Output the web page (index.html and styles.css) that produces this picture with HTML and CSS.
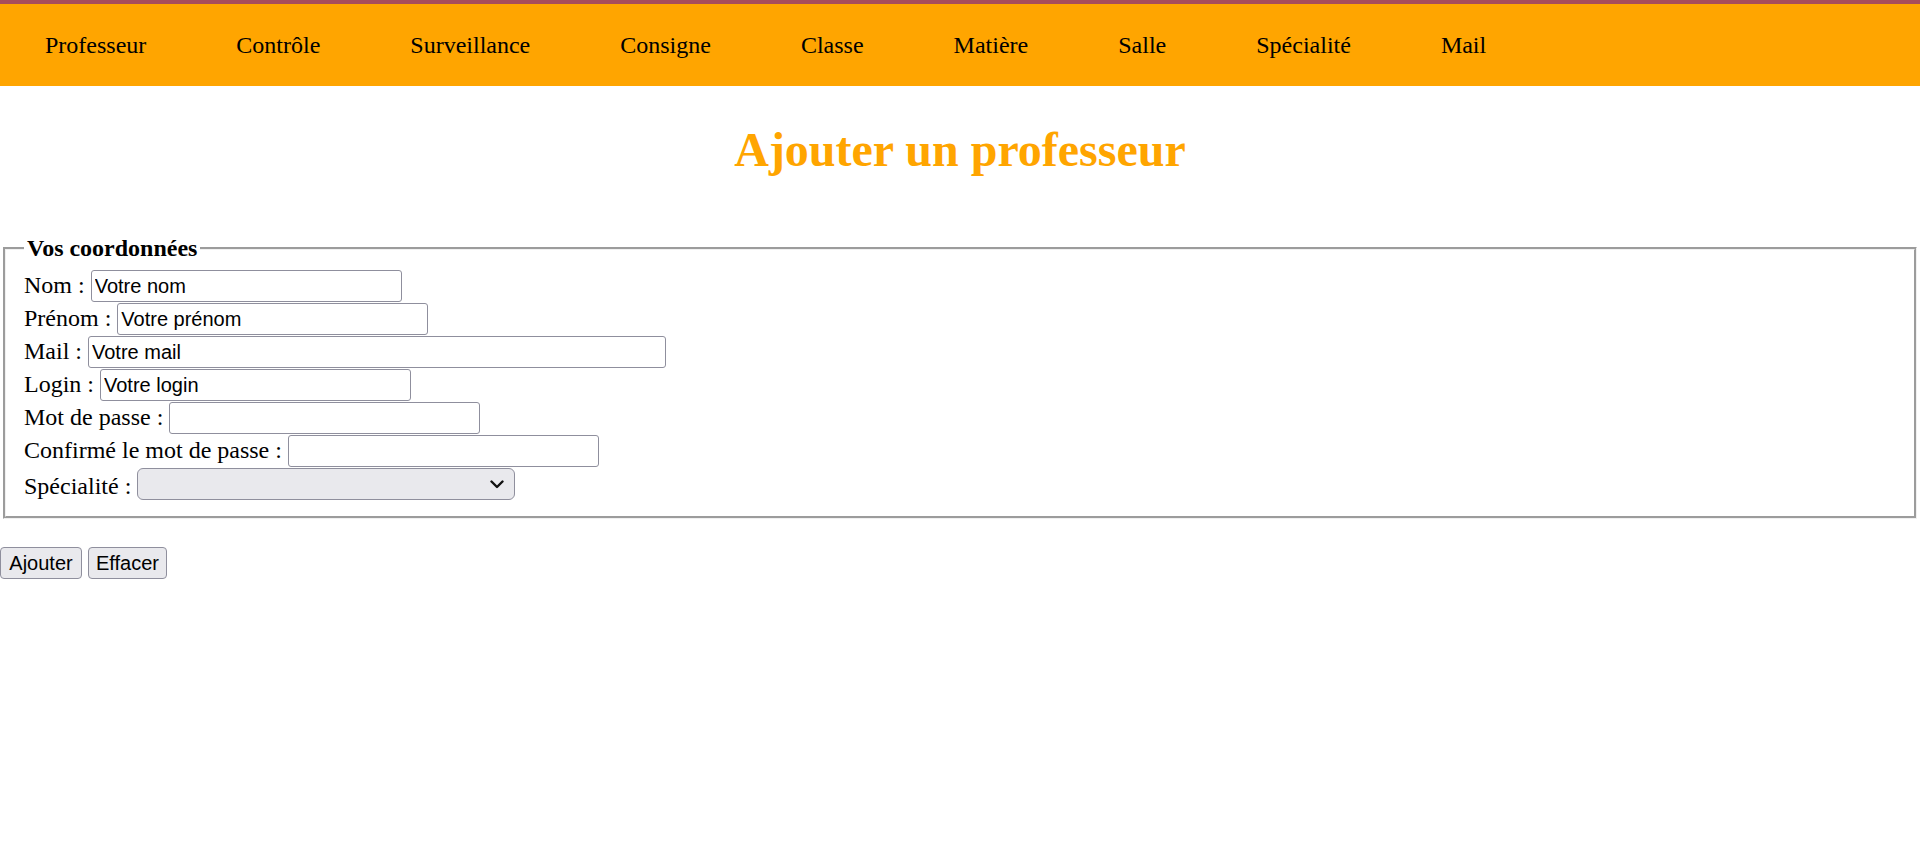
FILE: index.html
```html
<!DOCTYPE html>
<html lang="fr">
<head>
<meta charset="utf-8">
<title>Ajouter un professeur</title>
<link rel="stylesheet" href="styles.css">
</head>
<body>
<nav class="topnav">
  <ul class="menu">
    <li><a href="#">Professeur</a></li>
    <li><a href="#">Contrôle</a></li>
    <li><a href="#">Surveillance</a></li>
    <li><a href="#">Consigne</a></li>
    <li><a href="#">Classe</a></li>
    <li><a href="#">Matière</a></li>
    <li><a href="#">Salle</a></li>
    <li><a href="#">Spécialité</a></li>
    <li><a href="#">Mail</a></li>
  </ul>
</nav>
<h1 class="title">Ajouter un professeur</h1>
<form class="form">
  <fieldset class="box">
    <legend class="box-legend">Vos coordonnées</legend>
    <div class="row">Nom : <input class="field" type="text" value="Votre nom"></div>
    <div class="row">Prénom : <input class="field" type="text" value="Votre prénom"></div>
    <div class="row">Mail : <input class="field field-wide" type="text" value="Votre mail"></div>
    <div class="row">Login : <input class="field" type="text" value="Votre login"></div>
    <div class="row">Mot de passe : <input class="field" type="password"></div>
    <div class="row">Confirmé le mot de passe : <input class="field" type="password"></div>
    <div class="row">Spécialité : <span class="select-wrap"><select class="select"><option></option></select><svg class="chevron" width="14" height="9" viewBox="0 0 14 9"><polyline points="1.5,1.5 7,7 12.5,1.5" fill="none" stroke="#111" stroke-width="2.4" stroke-linecap="round" stroke-linejoin="round"/></svg></span></div>
  </fieldset>
  <div class="actions"><button class="btn btn-add" type="button">Ajouter</button> <button class="btn btn-clear" type="reset">Effacer</button></div>
</form>
</body>
</html>
```

FILE: styles.css
```css
html, body {
  margin: 0;
  padding: 0;
  background: #ffffff;
}
body {
  font-family: "Liberation Serif", "Times New Roman", serif;
  font-size: 24px;
  color: #000;
}
.topnav {
  border-top: 4px solid #a84d5b;
  background: #ffa500;
  height: 82px;
  display: flex;
  align-items: center;
}
.menu {
  list-style: none;
  margin: 0;
  padding: 0;
  display: flex;
}
.menu li {
  padding: 0 45px;
}
.menu a {
  color: #000;
  text-decoration: none;
}
.title {
  color: #ffa500;
  text-align: center;
  font-size: 48px;
  font-weight: bold;
  margin: 36px 0 58px;
}
.form {
  margin: 0;
}
.box {
  margin: 0 3px;
  border: 3px groove #f0f0f0;
  padding: 8px 18px 15px;
  min-width: 0;
}
.box-legend {
  padding: 0 3px;
  font-weight: bold;
}
.row {
  height: 33px;
  white-space: nowrap;
}
.field {
  box-sizing: border-box;
  width: 311px;
  height: 32px;
  margin: 0;
  padding: 0 3px;
  border: 1.5px solid #8f8f9d;
  border-radius: 3px;
  font-family: "Liberation Sans", Arial, sans-serif;
  font-size: 20px;
  color: #000;
  background: #fff;
  vertical-align: baseline;
}
.field-wide {
  width: 578px;
}
.select-wrap {
  position: relative;
  display: inline-block;
  vertical-align: bottom;
  height: 32px;
}
.select {
  -webkit-appearance: none;
  appearance: none;
  box-sizing: border-box;
  width: 378px;
  height: 32px;
  margin: 0;
  border: 1.5px solid #8f8f9d;
  border-radius: 6px;
  background: #e9e9ed;
  font-family: "Liberation Sans", Arial, sans-serif;
  font-size: 20px;
}
.chevron {
  position: absolute;
  right: 11px;
  top: 12px;
  pointer-events: none;
}
.actions {
  margin-top: 28px;
  font-size: 24px;
}
.btn {
  box-sizing: border-box;
  height: 32px;
  padding: 0;
  margin: 0;
  border: 1.5px solid #8f8f9d;
  border-radius: 4px;
  background: #e9e9ed;
  font-family: "Liberation Sans", Arial, sans-serif;
  font-size: 20px;
  color: #000;
  text-align: center;
  vertical-align: top;
}
.btn-add {
  width: 82px;
}
.btn-clear {
  width: 79px;
}
```
